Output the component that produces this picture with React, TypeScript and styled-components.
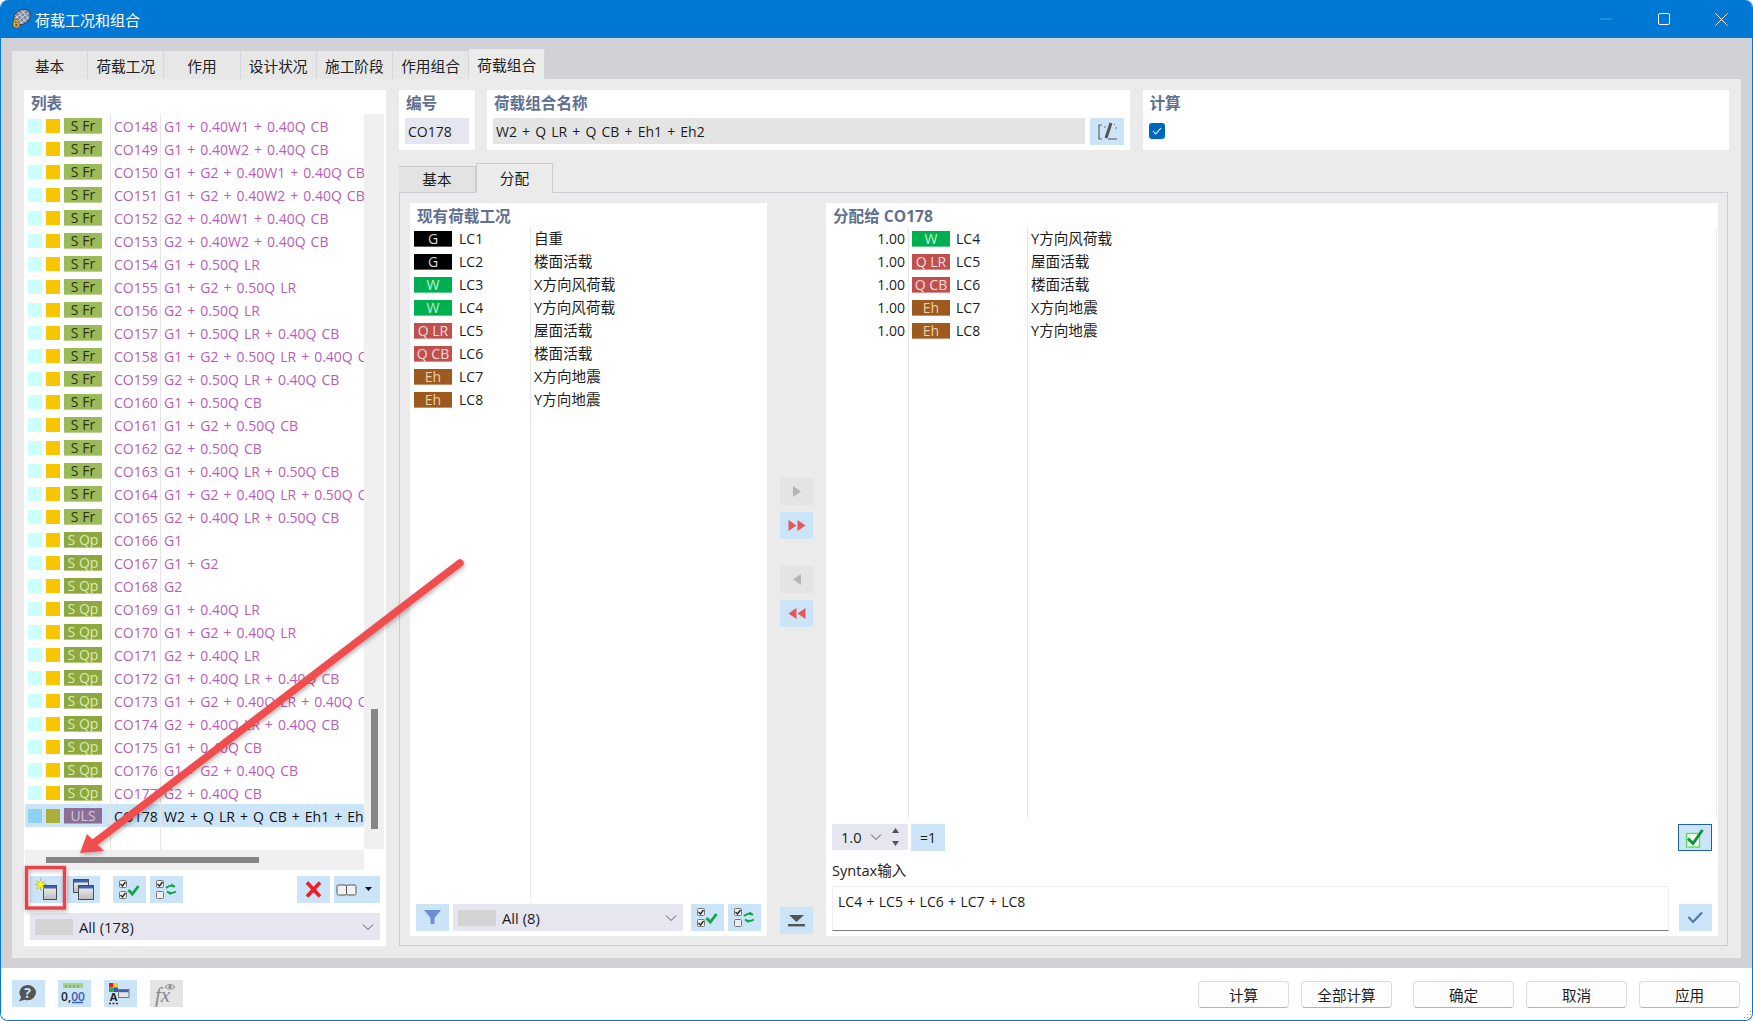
import React from "react";
import styled, { createGlobalStyle } from "styled-components";

const GlobalStyle = createGlobalStyle`
  html, body {
    margin: 0;
    padding: 0;
    background: #fff;
  }
  body {
    font-family: "Open Sans", "Noto Sans CJK SC", sans-serif;
    font-size: 14px;
    color: #1c1c1c;
  }
  * {
    box-sizing: border-box;
  }
`;

const Window = styled.div`
  position: relative;
  width: 1753px;
  height: 1021px;
  display: flex;
  flex-direction: column;
  border: 1px solid #0078d4;
  border-top: none;
  border-radius: 8px;
  overflow: hidden;
`;

const TitleBar = styled.header`
  height: 38px;
  flex: none;
  background: #0078d4;
  color: #fff;
  display: flex;
  align-items: center;
  padding: 0 1.5px 0 9px;
  font-size: 15px;
`;

const TitleText = styled.span`
  margin-left: 3px;
  flex: 1;
`;

const WindowButton = styled.div`
  width: 58px;
  height: 38px;
  display: flex;
  align-items: center;
  justify-content: center;
`;

const Body = styled.main`
  flex: 1;
  min-height: 0;
  background: #d2d1d6;
  padding: 11px 11px 10px 11px;
  display: flex;
  flex-direction: column;
`;

const TabBar = styled.nav`
  display: flex;
  height: 30px;
  flex: none;
  align-items: flex-end;
`;

const Tab = styled.div<{ $active?: boolean }>`
  width: 76.2px;
  height: ${(p) => (p.$active ? "30px" : "28px")};
  background: ${(p) => (p.$active ? "#ebebeb" : "#e7e7e7")};
  border-right: 1px solid #d6d6da;
  display: flex;
  align-items: center;
  justify-content: center;
  font-size: 14.7px;
  color: #222;
`;

const Panel = styled.section`
  flex: 1;
  min-height: 0;
  background: #ebebeb;
  padding: 11px 12px 12px 12px;
  display: grid;
  grid-template-columns: 362px 1fr;
  column-gap: 13px;
`;

const ListCard = styled.div`
  background: #fff;
  display: flex;
  flex-direction: column;
  min-height: 0;
  padding-bottom: 5px;
`;

const Heading = styled.div`
  height: 24px;
  flex: none;
  padding-left: 7px;
  display: flex;
  align-items: center;
  color: #62708f;
  font-size: 15.6px;
  font-weight: 700;
`;

const ListArea = styled.div`
  display: flex;
  height: 736px;
  flex: none;
  padding-left: 1px;
`;

const ListRows = styled.div`
  width: 339px;
  display: flex;
  flex-direction: column;
  overflow: hidden;
`;

const ListRow = styled.div<{ $selected?: boolean }>`
  display: grid;
  grid-template-columns: 85px 50px 1fr;
  height: 23px;
  flex: none;
  background: ${(p) => (p.$selected ? "#cce4f7" : "transparent")};
  border-radius: ${(p) => (p.$selected ? "2px" : "0")};
  color: ${(p) => (p.$selected ? "#111" : "#b95cb9")};
  white-space: nowrap;
  font-size: 14px;
  word-spacing: 1.4px;
`;

const FillerRow = styled(ListRow)`
  flex: 1;
  height: auto;
`;

const MarkCell = styled.div`
  display: flex;
  align-items: center;
  gap: 4px;
  padding-left: 3px;
`;

const Mark = styled.span<{ $color: string }>`
  width: 14px;
  height: 14px;
  flex: none;
  background: ${(p) => p.$color};
`;

const Badge = styled.span<{ $bg: string; $fg: string }>`
  width: 38px;
  height: 16px;
  flex: none;
  background: ${(p) => p.$bg};
  color: ${(p) => p.$fg};
  border-bottom: 1px solid rgba(255, 255, 255, 0.35);
  font-size: 14px;
  line-height: 16px;
  text-align: center;
  word-spacing: 0;
  white-space: nowrap;
`;

const TextCell = styled.div`
  border-left: 1px solid #e6e6e6;
  padding-left: 3px;
  line-height: 25px;
  overflow: hidden;
`;

const VScroll = styled.div`
  width: 20px;
  flex: none;
  height: 735px;
  background: #f0f0f0;
  padding: 595px 6px 20px 7px;
`;

const ScrollThumb = styled.div`
  width: 100%;
  height: 100%;
  background: #868686;
`;

const HScroll = styled.div`
  width: 339px;
  height: 20px;
  flex: none;
  margin-left: 1px;
  background: #f0f0f0;
  padding: 7px 105px 7px 21px;
  display: flex;
`;

const ToolRow = styled.div<{ $top: number }>`
  display: flex;
  margin: ${(p) => p.$top}px 6px 0;
  height: 27px;
  flex: none;
  gap: 4px;
`;

const IconButton = styled.button<{ $muted?: boolean; $ring?: boolean; $width?: number }>`
  width: ${(p) => p.$width ?? 33}px;
  height: 27px;
  flex: none;
  padding: 0;
  border: ${(p) => (p.$ring ? "1px solid #1f62a6" : "none")};
  background: ${(p) => (p.$muted ? "#e4e4e4" : "#cce4f7")};
  display: flex;
  align-items: center;
  justify-content: center;
`;

const Spacer = styled.div<{ $width?: number }>`
  flex: ${(p) => (p.$width ? "none" : "1")};
  width: ${(p) => (p.$width ? `${p.$width}px` : "auto")};
`;

const Combo = styled.div<{ $width?: number }>`
  height: 27px;
  flex: ${(p) => (p.$width ? "none" : "1")};
  width: ${(p) => (p.$width ? `${p.$width}px` : "auto")};
  background: #e6e6f0;
  display: flex;
  align-items: center;
  padding: 0 6px 0 5px;
  font-size: 14.8px;
`;

const Swatch = styled.span`
  width: 38px;
  height: 16px;
  background: #d4d4d4;
  margin-right: 6px;
  flex: none;
`;

const ComboLabel = styled.span`
  flex: 1;
`;

const RightColumn = styled.div`
  display: flex;
  flex-direction: column;
  min-height: 0;
`;

const TopRow = styled.div`
  display: grid;
  grid-template-columns: 75.5px 643px 1fr;
  column-gap: 12.5px;
  height: 60px;
  flex: none;
`;

const TopCard = styled.div`
  background: #fff;
  display: flex;
  flex-direction: column;
`;

const FieldRow = styled.div`
  display: flex;
  gap: 5px;
  padding: 4px 6px 0;
`;

const Field = styled.div<{ $bg: string }>`
  flex: 1;
  height: 26px;
  background: ${(p) => p.$bg};
  padding-left: 3px;
  line-height: 27px;
  font-size: 14px;
  word-spacing: 1.5px;
`;

const CheckMark = styled.span`
  width: 16px;
  height: 16px;
  margin: 9px 0 0 6px;
  border-radius: 3px;
  background: #0067c0;
  display: flex;
  align-items: center;
  justify-content: center;
`;

const SubTabBar = styled.div`
  display: flex;
  align-items: flex-end;
  height: 30px;
  margin-top: 13px;
  flex: none;
  position: relative;
  z-index: 1;
  margin-bottom: -1px;
`;

const SubTab = styled.div<{ $active?: boolean }>`
  width: 77px;
  height: ${(p) => (p.$active ? "30px" : "27px")};
  background: ${(p) => (p.$active ? "#ebebeb" : "#e3e3e3")};
  border: 1px solid #cbcbd3;
  border-bottom: ${(p) => (p.$active ? "1px solid #ebebeb" : "1px solid #cbcbd3")};
  border-left-width: ${(p) => (p.$active ? "1px" : "0")};
  display: flex;
  align-items: center;
  justify-content: center;
  font-size: 14.7px;
  padding-bottom: ${(p) => (p.$active ? "1px" : "2px")};
`;

const SubPanel = styled.div`
  flex: 1;
  min-height: 0;
  margin-right: 1px;
  border: 1px solid #cbcbd3;
  padding: 10px 9px 9px 10px;
  display: grid;
  grid-template-columns: 357px 59px 1fr;
`;

const AssignCard = styled.div`
  background: #fff;
  display: flex;
  flex-direction: column;
  min-height: 0;
  min-width: 0;
`;

const AssignList = styled.div`
  flex: 1;
  min-height: 0;
  display: flex;
  flex-direction: column;
`;

const AssignRight = styled(AssignList)`
  border-right: 1px solid #ededed;
  margin-right: 1px;
`;

const CaseRow = styled.div<{ $fill?: boolean; $right?: boolean }>`
  display: grid;
  grid-template-columns: ${(p) => (p.$right ? "82px 119px 1fr" : "120px 1fr")};
  height: ${(p) => (p.$fill ? "auto" : "23px")};
  flex: ${(p) => (p.$fill ? "1" : "none")};
  white-space: nowrap;
  font-size: 14px;
`;

const CaseCell = styled.div`
  display: flex;
  align-items: center;
  gap: 7px;
  padding-left: 4px;
`;

const ValueCell = styled.div`
  text-align: right;
  padding-right: 3px;
  line-height: 23px;
`;

const CaseAssigned = styled(CaseCell)`
  border-left: 1px solid #e6e6e6;
  padding-left: 3px;
  gap: 6px;
`;

const CaseName = styled.div`
  border-left: 1px solid #e6e6e6;
  padding-left: 3px;
  line-height: 23px;
  font-size: 14.6px;
`;

const MoveColumn = styled.div`
  display: flex;
  flex-direction: column;
  align-items: center;
  padding: 275px 0 2px;
`;

const MoveGap = styled.div<{ $height: number }>`
  height: ${(p) => p.$height}px;
  flex: none;
`;

const RightControls = styled.div`
  display: flex;
  align-items: flex-start;
  gap: 3px;
  height: 27px;
  margin: 6px 6px 0;
  flex: none;
`;

const Stepper = styled.div`
  width: 76px;
  height: 26px;
  background: #e6e6f0;
  display: flex;
  align-items: center;
  padding-left: 9px;
  gap: 8px;
  font-size: 14.6px;
`;

const StepArrows = styled.span`
  display: flex;
  flex-direction: column;
  gap: 8px;
  margin-left: 2px;
`;

const EqualsButton = styled.div`
  width: 34px;
  height: 27px;
  background: #cce4f7;
  display: flex;
  align-items: center;
  justify-content: center;
  font-size: 14px;
`;

const SyntaxLabel = styled.div`
  height: 22px;
  margin: 8px 6px 0;
  line-height: 22px;
  flex: none;
  font-size: 14.6px;
`;

const SyntaxRow = styled.div`
  display: flex;
  align-items: flex-end;
  gap: 10px;
  margin: 5px 6px 5px;
  flex: none;
`;

const SyntaxInput = styled.div`
  flex: 1;
  height: 45px;
  border: 1px solid #efefef;
  border-bottom: 1px solid #7c7c7c;
  padding: 4px 5px;
  font-size: 14px;
  line-height: 22px;
  word-spacing: 0.7px;
`;

const Footer = styled.footer`
  height: 52px;
  flex: none;
  background: #fff;
  display: flex;
  align-items: center;
  padding: 0 12px 0 11px;
`;

const FooterIcons = styled.div`
  display: flex;
  gap: 13px;
  margin-top: -1px;
  flex: 1;
`;

const FooterButtons = styled.div`
  display: flex;
`;

const DialogButton = styled.button<{ $width: number; $after?: number }>`
  width: ${(p) => p.$width}px;
  margin-right: ${(p) => p.$after ?? 0}px;
  height: 27px;
  background: #fdfdfd;
  border: 1px solid #dcdcdc;
  border-bottom-color: #b4b4b4;
  border-radius: 4px;
  font-family: inherit;
  font-size: 14.6px;
  color: #1c1c1c;
  padding: 0;
`;

const Overlay = styled.svg`
  position: absolute;
  left: -1px;
  top: 0;
  pointer-events: none;
`;

const Grip = styled.svg`
  position: absolute;
  right: 0;
  bottom: 0;
`;

type Kind = "fr" | "qp" | "uls";

const KIND_BADGE: Record<Kind, { label: string; bg: string; fg: string }> = {
  fr: { label: "S Fr", bg: "#9bbb59", fg: "#2c3314" },
  qp: { label: "S Qp", bg: "#8ca83f", fg: "#dcebb0" },
  uls: { label: "ULS", bg: "#8c6f95", fg: "#d4c6dc" },
};

const FORMULAS_FR = [
  "G1 + 0.40W1 + 0.40Q CB",
  "G1 + 0.40W2 + 0.40Q CB",
  "G1 + G2 + 0.40W1 + 0.40Q CB",
  "G1 + G2 + 0.40W2 + 0.40Q CB",
  "G2 + 0.40W1 + 0.40Q CB",
  "G2 + 0.40W2 + 0.40Q CB",
  "G1 + 0.50Q LR",
  "G1 + G2 + 0.50Q LR",
  "G2 + 0.50Q LR",
  "G1 + 0.50Q LR + 0.40Q CB",
  "G1 + G2 + 0.50Q LR + 0.40Q CB",
  "G2 + 0.50Q LR + 0.40Q CB",
  "G1 + 0.50Q CB",
  "G1 + G2 + 0.50Q CB",
  "G2 + 0.50Q CB",
  "G1 + 0.40Q LR + 0.50Q CB",
  "G1 + G2 + 0.40Q LR + 0.50Q CB",
  "G2 + 0.40Q LR + 0.50Q CB",
];

const FORMULAS_QP = [
  "G1",
  "G1 + G2",
  "G2",
  "G1 + 0.40Q LR",
  "G1 + G2 + 0.40Q LR",
  "G2 + 0.40Q LR",
  "G1 + 0.40Q LR + 0.40Q CB",
  "G1 + G2 + 0.40Q LR + 0.40Q CB",
  "G2 + 0.40Q LR + 0.40Q CB",
  "G1 + 0.40Q CB",
  "G1 + G2 + 0.40Q CB",
  "G2 + 0.40Q CB",
];

const combos: { id: string; kind: Kind; text: string }[] = [
  ...FORMULAS_FR.map((text, i) => ({ id: `CO${148 + i}`, kind: "fr" as Kind, text })),
  ...FORMULAS_QP.map((text, i) => ({ id: `CO${166 + i}`, kind: "qp" as Kind, text })),
  { id: "CO178", kind: "uls", text: "W2 + Q LR + Q CB + Eh1 + Eh2" },
];

const CASE_BADGE: Record<string, { bg: string; fg: string }> = {
  G: { bg: "#000000", fg: "#d8d8d8" },
  W: { bg: "#00b050", fg: "#bdf0d0" },
  "Q LR": { bg: "#c0504d", fg: "#f6dcdb" },
  "Q CB": { bg: "#c0504d", fg: "#f6dcdb" },
  Eh: { bg: "#9c5a1f", fg: "#ecd0a8" },
};

const cases = [
  { id: "LC1", type: "G", name: "自重" },
  { id: "LC2", type: "G", name: "楼面活载" },
  { id: "LC3", type: "W", name: "X方向风荷载" },
  { id: "LC4", type: "W", name: "Y方向风荷载" },
  { id: "LC5", type: "Q LR", name: "屋面活载" },
  { id: "LC6", type: "Q CB", name: "楼面活载" },
  { id: "LC7", type: "Eh", name: "X方向地震" },
  { id: "LC8", type: "Eh", name: "Y方向地震" },
];

const assigned = cases.filter((c) => ["LC4", "LC5", "LC6", "LC7", "LC8"].includes(c.id));

const ToolSvg = ({ children }: { children: React.ReactNode }) => (
  <svg width="33" height="27" viewBox="0 0 33 27">
    {children}
  </svg>
);

const IconDefs = () => (
  <svg width="0" height="0" style={{ position: "absolute" }}>
    <defs>
      <linearGradient id="paneFill" x1="0" y1="0" x2="0" y2="1">
        <stop offset="0" stopColor="#f4f4f4" />
        <stop offset="1" stopColor="#bcbcbc" />
      </linearGradient>
    </defs>
  </svg>
);

const MiniWindow = ({ x, y, w, h }: { x: number; y: number; w: number; h: number }) => (
  <g>
    <rect x={x + 0.5} y={y + 0.5} width={w} height={h} fill="url(#paneFill)" stroke="#4f4f4f" />
    <rect x={x + 1} y={y + 1} width={w - 1} height={2.5} fill="#3d5fb0" />
  </g>
);

const NewIcon = () => (
  <ToolSvg>
    <MiniWindow x={13} y={9} w={13} h={14} />
    <path d="M10.7 2 v13 M4.5 8.7 h12.5 M6.3 4.3 l8.8 8.8 M15.1 4.3 l-8.8 8.8" stroke="#9a9a7a" strokeWidth="0.7" />
    <polygon
      points="10.7,3.7 12,7.2 15.7,7.2 12.8,9.5 13.8,13 10.7,11 7.6,13 8.6,9.5 5.7,7.2 9.4,7.2"
      fill="#ffff00"
      stroke="#c9b800"
      strokeWidth="0.4"
    />
  </ToolSvg>
);

const CopyIcon = () => (
  <ToolSvg>
    <MiniWindow x={6} y={3} w={15} h={13} />
    <MiniWindow x={11} y={9} w={15} h={14} />
  </ToolSvg>
);

const SmallBox = ({ x, y, checked }: { x: number; y: number; checked?: boolean }) => (
  <g>
    <rect x={x + 0.5} y={y + 0.5} width={7} height={7} rx="1" fill="#eeeeee" stroke="#777" />
    {checked && <path d={`M${x + 1.5} ${y + 4} l2 2 l3 -4`} fill="none" stroke="#222" strokeWidth="1.3" />}
  </g>
);

const CheckAllIcon = () => (
  <ToolSvg>
    <SmallBox x={6} y={4} checked />
    <SmallBox x={6} y={15} checked />
    <path d="M15.5 14 l3.8 4 l6.2 -8" fill="none" stroke="#12a54a" strokeWidth="2.8" />
  </ToolSvg>
);

const ToggleIcon = () => (
  <ToolSvg>
    <SmallBox x={6} y={4} checked />
    <SmallBox x={6} y={15} />
    <path d="M16 12 q4 -4 9 -1 M25 11 l-4 -2.6 M17 15.5 q4 3 9 0 M17 15.5 l4 2.6" fill="none" stroke="#12a54a" strokeWidth="2" />
  </ToolSvg>
);

const CrossIcon = () => (
  <ToolSvg>
    <path d="M10 6.5 L23 20.5 M23 6.5 L10 20.5" stroke="#ee1c25" strokeWidth="3.6" />
  </ToolSvg>
);

const ColumnsIcon = () => (
  <svg width="46" height="27" viewBox="0 0 46 27">
    <rect x="3" y="9" width="9.5" height="10" rx="1.5" fill="#f2f2f2" stroke="#555" strokeWidth="1" />
    <rect x="12.5" y="9" width="9.5" height="10" rx="1.5" fill="#f2f2f2" stroke="#555" strokeWidth="1" />
    <polygon points="31,11 38,11 34.5,15" fill="#111" />
  </svg>
);

const Chevron = () => (
  <svg width="12" height="8" viewBox="0 0 12 8">
    <path d="M1 1.5 L6 6.5 L11 1.5" fill="none" stroke="#555" strokeWidth="1" />
  </svg>
);

const FilterIcon = () => (
  <ToolSvg>
    <polygon points="8,6 25,6 18.5,14 18.5,20 14.5,20 14.5,14" fill="#6d8fd2" />
  </ToolSvg>
);

const Triangles = ({ dir, count, color }: { dir: "left" | "right"; count: number; color: string }) => (
  <ToolSvg>
    {Array.from({ length: count }).map((_, i) => {
      const start = count === 1 ? 13 : 8.5 + i * 9;
      return dir === "right" ? (
        <polygon key={i} points={`${start},8 ${start + 8},13.5 ${start},19`} fill={color} />
      ) : (
        <polygon key={i} points={`${start + 8},8 ${start},13.5 ${start + 8},19`} fill={color} />
      );
    })}
  </ToolSvg>
);

const DownIcon = () => (
  <ToolSvg>
    <polygon points="9,8 24,8 16.5,15" fill="#555" />
    <rect x="8" y="17" width="17" height="2.4" fill="#555" />
  </ToolSvg>
);

const EditIcon = () => (
  <svg width="34" height="27" viewBox="0 0 34 27">
    <path d="M12 7 H9 V21 H12" fill="none" stroke="#666" strokeWidth="1.2" />
    <path d="M21 5 L16 20" stroke="#555" strokeWidth="3" />
    <path d="M18 21 H27" stroke="#666" strokeWidth="1.2" />
    <path d="M14 9 h2 M24 6 l1 1 M25 10 h2" stroke="#777" strokeWidth="1" />
  </svg>
);

const GreenCheckBox = () => (
  <svg width="31" height="25" viewBox="0 0 31 25">
    <rect x="6.5" y="8.5" width="13" height="13.5" fill="#f6fff4" stroke="#55dd55" strokeWidth="1.3" />
    <path d="M8 13.5 l5 5 l9.5 -13.5" fill="none" stroke="#129040" strokeWidth="3" />
  </svg>
);

const ThinCheck = () => (
  <ToolSvg>
    <path d="M9.5 13 l4.5 5 l9 -9.5" fill="none" stroke="#4a7ab0" strokeWidth="2.2" />
  </ToolSvg>
);

const HelpIcon = () => (
  <ToolSvg>
    <path d="M15.5 5 a8.5 7.6 0 0 1 0 15.2 a9 9 0 0 1 -3 -.5 l-5.5 1.8 l2.2 -4.4 A8.5 7.6 0 0 1 15.5 5 z" fill="#555" />
    <text x="15.5" y="17.6" textAnchor="middle" fontSize="14" fontWeight="700" fill="#cce4f7" fontFamily="Open Sans, sans-serif">?</text>
  </ToolSvg>
);

const UnitsIcon = () => (
  <ToolSvg>
    <rect x="5" y="3" width="20" height="5" fill="#a5d27f" />
    <path d="M8 5 v3 M12 5 v3 M16 5 v3 M20 5 v3" stroke="#6f9c4e" strokeWidth="1" />
    <text x="15" y="20.5" textAnchor="middle" fontSize="12" fontWeight="600" fill="#222" fontFamily="Open Sans, sans-serif">
      0,<tspan fill="#3d5fb0">00</tspan>
    </text>
    <path d="M14 22.5 h11" stroke="#3d5fb0" strokeWidth="1.4" />
  </ToolSvg>
);

const ColorWindowIcon = () => (
  <ToolSvg>
    <rect x="5" y="3" width="4.5" height="4.5" fill="#e02020" />
    <rect x="9.5" y="3" width="4.5" height="4.5" fill="#f0d020" />
    <rect x="5" y="7.5" width="4.5" height="4.5" fill="#2fae3e" />
    <rect x="9.5" y="7.5" width="4.5" height="4.5" fill="#3050d0" />
    <text x="9.5" y="21" textAnchor="middle" fontSize="11" fontWeight="700" fill="#222" fontFamily="Open Sans, sans-serif">A</text>
    <path d="M5 23.5 h2 M8.5 23.5 h2 M12 23.5 h2" stroke="#333" strokeWidth="1.6" />
    <rect x="14.5" y="9.5" width="10.5" height="8" fill="#e4e4e4" stroke="#777" />
    <rect x="15" y="10" width="9.5" height="2.2" fill="#3d5fb0" />
  </ToolSvg>
);

const FxIcon = () => (
  <ToolSvg>
    <text x="5" y="22" fontSize="21" fontStyle="italic" fill="#8a8a8a" fontFamily="Liberation Serif, serif">fx</text>
    <path d="M15 7 q5 -5 10 0 q-5 4.4 -10 0 z" fill="#e4e4e4" stroke="#8a8a8a" strokeWidth="1" />
    <circle cx="20" cy="6.8" r="1.6" fill="#8a8a8a" />
  </ToolSvg>
);

const AppIcon = () => (
  <svg width="22" height="24" viewBox="0 0 22 24">
    <g transform="rotate(-38 12 10)">
      <ellipse cx="12" cy="10" rx="9.2" ry="7" fill="#7b879c" stroke="#2f3644" strokeWidth="0.8" />
      <path d="M5 7 h14 M4 10.5 h16 M6 14 h12 M8 4 v12 M12 3.5 v13 M16 4 v12" stroke="#dfe5ee" strokeWidth="0.8" />
    </g>
    <text x="6" y="21" textAnchor="middle" fontSize="12" fontWeight="800" fill="#e8b437" stroke="#3a2f10" strokeWidth="0.4" fontFamily="Open Sans, sans-serif">6</text>
  </svg>
);

const Minimize = () => (
  <svg width="12" height="2" viewBox="0 0 12 2">
    <path d="M0 1 H12" stroke="#4aa0e4" strokeWidth="1" />
  </svg>
);

const Maximize = () => (
  <svg width="12" height="12" viewBox="0 0 12 12">
    <rect x="0.5" y="0.5" width="11" height="11" rx="1.5" fill="none" stroke="#fff" strokeWidth="1" />
  </svg>
);

const CloseGlyph = () => (
  <svg width="13" height="13" viewBox="0 0 13 13">
    <path d="M0.5 0.5 L12.5 12.5 M12.5 0.5 L0.5 12.5" stroke="#fff" strokeWidth="1" />
  </svg>
);

const TABS = ["基本", "荷载工况", "作用", "设计状况", "施工阶段", "作用组合", "荷载组合"];

const CaseBadge = ({ type }: { type: string }) => (
  <Badge $bg={CASE_BADGE[type].bg} $fg={CASE_BADGE[type].fg}>
    {type}
  </Badge>
);

const App = () => {
  return (
    <>
      <GlobalStyle />
      <IconDefs />
      <Window>
        <TitleBar>
          <AppIcon />
          <TitleText>荷载工况和组合</TitleText>
          <WindowButton>
            <Minimize />
          </WindowButton>
          <WindowButton>
            <Maximize />
          </WindowButton>
          <WindowButton>
            <CloseGlyph />
          </WindowButton>
        </TitleBar>
        <Body>
          <TabBar>
            {TABS.map((t, i) => (
              <Tab key={t} $active={i === TABS.length - 1}>
                {t}
              </Tab>
            ))}
          </TabBar>
          <Panel>
            <ListCard>
              <Heading>列表</Heading>
              <ListArea>
                <ListRows>
                  {combos.map((c) => {
                    const b = KIND_BADGE[c.kind];
                    const selected = c.kind === "uls";
                    return (
                      <ListRow key={c.id} $selected={selected}>
                        <MarkCell>
                          <Mark $color={selected ? "#8fd3f4" : "#ccffff"} />
                          <Mark $color={selected ? "#adad3c" : "#f7c600"} />
                          <Badge $bg={b.bg} $fg={b.fg}>
                            {b.label}
                          </Badge>
                        </MarkCell>
                        <TextCell>{c.id}</TextCell>
                        <TextCell>{c.text}</TextCell>
                      </ListRow>
                    );
                  })}
                  <FillerRow>
                    <div />
                    <TextCell />
                    <TextCell />
                  </FillerRow>
                </ListRows>
                <VScroll>
                  <ScrollThumb />
                </VScroll>
              </ListArea>
              <HScroll>
                <ScrollThumb />
              </HScroll>
              <ToolRow $top={6}>
                <IconButton>
                  <NewIcon />
                </IconButton>
                <IconButton>
                  <CopyIcon />
                </IconButton>
                <Spacer $width={5} />
                <IconButton>
                  <CheckAllIcon />
                </IconButton>
                <IconButton>
                  <ToggleIcon />
                </IconButton>
                <Spacer />
                <IconButton>
                  <CrossIcon />
                </IconButton>
                <IconButton $width={46}>
                  <ColumnsIcon />
                </IconButton>
              </ToolRow>
              <ToolRow $top={10}>
                <Combo>
                  <Swatch />
                  <ComboLabel>All (178)</ComboLabel>
                  <Chevron />
                </Combo>
              </ToolRow>
            </ListCard>
            <RightColumn>
              <TopRow>
                <TopCard>
                  <Heading>编号</Heading>
                  <FieldRow>
                    <Field $bg="#e6e6f0">CO178</Field>
                  </FieldRow>
                </TopCard>
                <TopCard>
                  <Heading>荷载组合名称</Heading>
                  <FieldRow>
                    <Field $bg="#e4e4e4">W2 + Q LR + Q CB + Eh1 + Eh2</Field>
                    <IconButton $width={34}>
                      <EditIcon />
                    </IconButton>
                  </FieldRow>
                </TopCard>
                <TopCard>
                  <Heading>计算</Heading>
                  <CheckMark>
                    <svg width="10" height="8" viewBox="0 0 10 8">
                      <path d="M1 4 l2.7 3 L9 1" fill="none" stroke="#fff" strokeWidth="1.1" />
                    </svg>
                  </CheckMark>
                </TopCard>
              </TopRow>
              <SubTabBar>
                <SubTab>基本</SubTab>
                <SubTab $active>分配</SubTab>
              </SubTabBar>
              <SubPanel>
                <AssignCard>
                  <Heading>现有荷载工况</Heading>
                  <AssignList>
                    {cases.map((c) => (
                      <CaseRow key={c.id}>
                        <CaseCell>
                          <CaseBadge type={c.type} />
                          {c.id}
                        </CaseCell>
                        <CaseName>{c.name}</CaseName>
                      </CaseRow>
                    ))}
                    <CaseRow $fill>
                      <div />
                      <CaseName />
                    </CaseRow>
                  </AssignList>
                  <ToolRow $top={6}>
                    <IconButton>
                      <FilterIcon />
                    </IconButton>
                    <Combo $width={230}>
                      <Swatch />
                      <ComboLabel>All (8)</ComboLabel>
                      <Chevron />
                    </Combo>
                    <Spacer />
                    <IconButton>
                      <CheckAllIcon />
                    </IconButton>
                    <IconButton>
                      <ToggleIcon />
                    </IconButton>
                  </ToolRow>
                  <MoveGap $height={5} />
                </AssignCard>
                <MoveColumn>
                  <IconButton $muted>
                    <Triangles dir="right" count={1} color="#b4b4b4" />
                  </IconButton>
                  <MoveGap $height={7} />
                  <IconButton>
                    <Triangles dir="right" count={2} color="#e4585c" />
                  </IconButton>
                  <MoveGap $height={27} />
                  <IconButton $muted>
                    <Triangles dir="left" count={1} color="#b4b4b4" />
                  </IconButton>
                  <MoveGap $height={7} />
                  <IconButton>
                    <Triangles dir="left" count={2} color="#e4585c" />
                  </IconButton>
                  <Spacer />
                  <IconButton>
                    <DownIcon />
                  </IconButton>
                </MoveColumn>
                <AssignCard>
                  <Heading>分配给 CO178</Heading>
                  <AssignRight>
                    {assigned.map((c) => (
                      <CaseRow key={c.id} $right>
                        <ValueCell>1.00</ValueCell>
                        <CaseAssigned>
                          <CaseBadge type={c.type} />
                          {c.id}
                        </CaseAssigned>
                        <CaseName>{c.name}</CaseName>
                      </CaseRow>
                    ))}
                    <CaseRow $right $fill>
                      <div />
                      <CaseName />
                      <CaseName />
                    </CaseRow>
                  </AssignRight>
                  <RightControls>
                    <Stepper>
                      1.0
                      <Chevron />
                      <StepArrows>
                        <svg width="7" height="5" viewBox="0 0 7 5">
                          <polygon points="3.5,0 7,5 0,5" fill="#555" />
                        </svg>
                        <svg width="7" height="5" viewBox="0 0 7 5">
                          <polygon points="0,0 7,0 3.5,5" fill="#555" />
                        </svg>
                      </StepArrows>
                    </Stepper>
                    <EqualsButton>=1</EqualsButton>
                    <Spacer />
                    <IconButton $ring $width={34}>
                      <GreenCheckBox />
                    </IconButton>
                  </RightControls>
                  <SyntaxLabel>Syntax输入</SyntaxLabel>
                  <SyntaxRow>
                    <SyntaxInput>LC4 + LC5 + LC6 + LC7 + LC8</SyntaxInput>
                    <IconButton>
                      <ThinCheck />
                    </IconButton>
                  </SyntaxRow>
                </AssignCard>
              </SubPanel>
            </RightColumn>
          </Panel>
        </Body>
        <Footer>
          <FooterIcons>
            <IconButton>
              <HelpIcon />
            </IconButton>
            <IconButton>
              <UnitsIcon />
            </IconButton>
            <IconButton>
              <ColorWindowIcon />
            </IconButton>
            <IconButton $muted>
              <FxIcon />
            </IconButton>
          </FooterIcons>
          <FooterButtons>
            <DialogButton $width={91} $after={12}>计算</DialogButton>
            <DialogButton $width={91} $after={21}>全部计算</DialogButton>
            <DialogButton $width={101} $after={12}>确定</DialogButton>
            <DialogButton $width={101} $after={12}>取消</DialogButton>
            <DialogButton $width={101}>应用</DialogButton>
          </FooterButtons>
        </Footer>
        <Overlay width="1753" height="1021" viewBox="0 0 1753 1021">
          <defs>
            <filter id="soft" x="-10%" y="-10%" width="120%" height="120%">
              <feDropShadow dx="1" dy="2" stdDeviation="2" floodColor="#000" floodOpacity="0.3" />
            </filter>
          </defs>
          <g filter="url(#soft)">
            <path d="M460 563 L94 843" stroke="#f04e50" strokeWidth="7.5" strokeLinecap="round" />
            <polygon points="80,853 87,834 104,851" fill="#f04e50" />
            <rect x="26.5" y="867.5" width="38" height="40.5" fill="none" stroke="#e4444a" strokeWidth="3.4" />
          </g>
        </Overlay>
        <Grip width="10" height="10" viewBox="0 0 10 10">
          <path d="M8 1 h1 v1 h-1 z M5 4 h1 v1 h-1 z M8 4 h1 v1 h-1 z M2 7 h1 v1 h-1 z M5 7 h1 v1 h-1 z M8 7 h1 v1 h-1 z" fill="#999" />
        </Grip>
      </Window>
    </>
  );
};

export default App;
